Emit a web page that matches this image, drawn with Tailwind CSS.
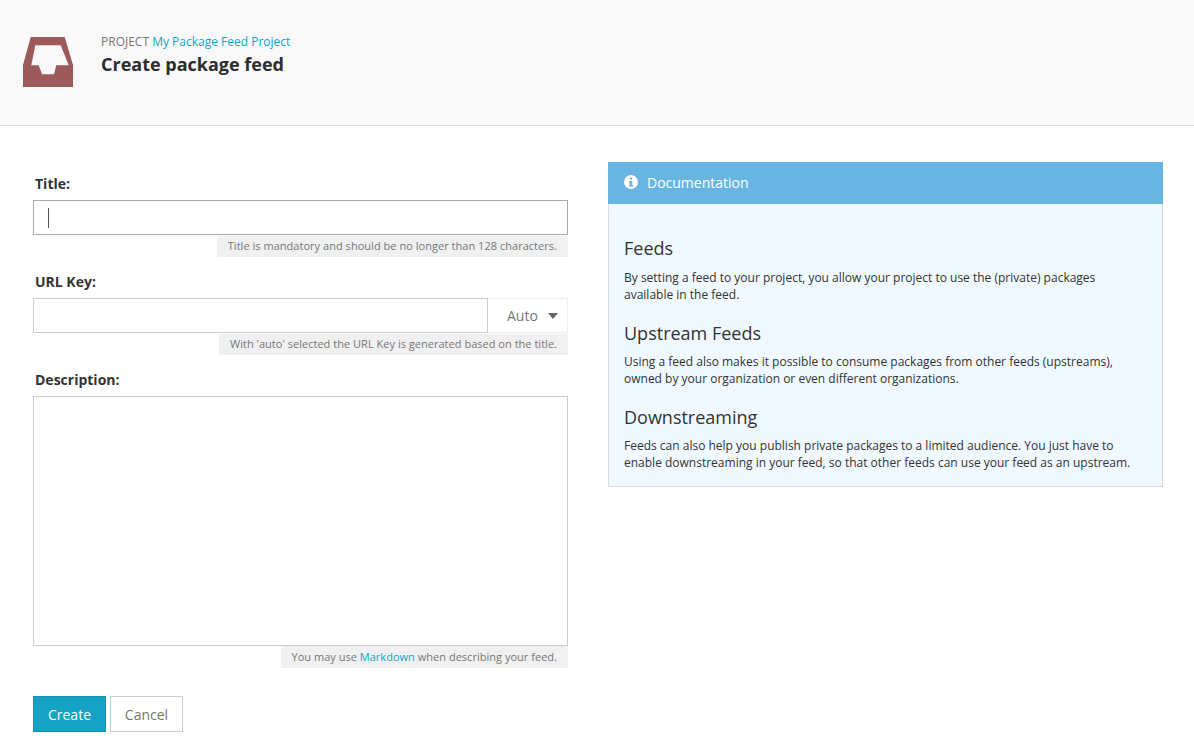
<!DOCTYPE html>
<html>
<head>
<meta charset="utf-8">
<script src="https://cdn.jsdelivr.net/npm/@tailwindcss/browser@4"></script>
</head>
<body class="bg-white font-['Open_Sans',sans-serif] text-[#333] overflow-hidden">
<div class="w-[1194px] h-[745px] overflow-hidden">
  <header class="h-[126px] bg-[#f9f9f9] border-b border-[#ddd] flex items-start pl-[23px] pt-[37px]">
    <svg class="w-[50px] h-[50px] shrink-0" viewBox="0 0 50 50">
      <path fill="#9c5a5a" fill-rule="evenodd" d="M7.700 0H41.700L50 28V50H0V28ZM12.300 8.300L8.300 28.300H15.700L19 37.300H31L33.300 28.300H45.700L37.700 8.300Z"/>
    </svg>
    <div class="ml-[28px] -mt-[3px]">
      <div class="text-[12px] leading-[16px] text-[#777]">PROJECT <a class="text-[#16a2c5]">My Package Feed Project</a></div>
      <h1 class="text-[18px] leading-[24px] font-bold text-[#2d2d2d] mt-[2px]">Create package feed</h1>
    </div>
  </header>
  <main class="flex pl-[33px] pt-[36px]">
    <form class="w-[535px] pt-[12px]">
      <label class="block text-[14px] leading-[20px] font-bold pl-[2px] h-[26px] text-[#333]">Title:</label>
      <div class="h-[35px] border border-[#aaa] bg-white flex items-center pl-[14px]"><span class="w-px h-[20px] bg-[#555]"></span></div>
      <div class="flex justify-end mt-[1px]"><span class="h-[21px] bg-[#f0f0f0] px-[11px] text-[11px] leading-[20px] tracking-[0.03px] text-[#777]">Title is mandatory and should be no longer than 128 characters.</span></div>
      <label class="block text-[14px] leading-[20px] font-bold pl-[2px] h-[26px] mt-[15px] text-[#333]">URL Key:</label>
      <div class="h-[35px] flex">
        <div class="flex-1 border border-[#ccc] bg-white"></div>
        <div class="w-[80px] border border-l-0 border-[#eee] flex items-center text-[14px] text-[#777] pl-[19px]">Auto<svg class="w-[10px] h-[6px] ml-[10px]" viewBox="0 0 10 6"><path fill="#666" d="M0 0H10L5 6Z"/></svg></div>
      </div>
      <div class="flex justify-end mt-[1px]"><span class="h-[21px] bg-[#f0f0f0] px-[11px] text-[11px] leading-[20px] tracking-[0.02px] text-[#777]">With 'auto' selected the URL Key is generated based on the title.</span></div>
      <label class="block text-[14px] leading-[20px] font-bold pl-[2px] h-[26px] mt-[15px] text-[#333]">Description:</label>
      <div class="h-[250px] border border-[#ccc] bg-white"></div>
      <div class="flex justify-end"><span class="h-[22px] bg-[#f0f0f0] px-[11px] text-[11px] leading-[22px] tracking-[0.02px] text-[#777]">You may use <a class="text-[#16a2c5]">Markdown</a> when describing your feed.</span></div>
      <div class="flex gap-[4px] mt-[28px]">
        <button type="button" class="w-[73px] h-[36px] bg-[#16a2c5] border border-[#1392b2] text-white text-[14px]">Create</button>
        <button type="button" class="w-[73px] h-[36px] bg-white border border-[#ccc] text-[#777] text-[14px]">Cancel</button>
      </div>
    </form>
    <aside class="w-[555px] ml-[40px] self-start">
      <div class="h-[42px] bg-[#68b5e2] flex items-center pl-[16px] pb-[2px] text-white text-[14px]">
        <svg class="w-[14px] h-[14px] mr-[9px]" viewBox="0 0 14 14"><circle cx="7" cy="7" r="7" fill="#fff"/><path fill="#68b5e2" d="M5.800 2.500H8.200V4.500H5.800ZM5 6H8.200V10H9V11.500H5V10H5.800V7.500H5Z"/></svg>
        Documentation
      </div>
      <div class="bg-[#f0f9ff] border border-t-0 border-[#ddd] h-[283px] px-[15px] pt-[32px] text-[#333]">
        <h2 class="text-[18px] leading-[24px]">Feeds</h2>
        <p class="text-[12px] leading-[17px] mt-[9px]">By setting a feed to your project, you allow your project to use the (private) packages<br>available in the feed.</p>
        <h2 class="text-[18px] leading-[24px] mt-[18px]">Upstream Feeds</h2>
        <p class="text-[12px] leading-[17px] mt-[8px]">Using a feed also makes it possible to consume packages from other feeds (upstreams),<br>owned by your organization or even different organizations.</p>
        <h2 class="text-[18px] leading-[24px] mt-[18px]">Downstreaming</h2>
        <p class="text-[12px] leading-[17px] mt-[8px]">Feeds can also help you publish private packages to a limited audience. You just have to<br>enable downstreaming in your feed, so that other feeds can use your feed as an upstream.</p>
      </div>
    </aside>
  </main>
</div>
</body>
</html>
